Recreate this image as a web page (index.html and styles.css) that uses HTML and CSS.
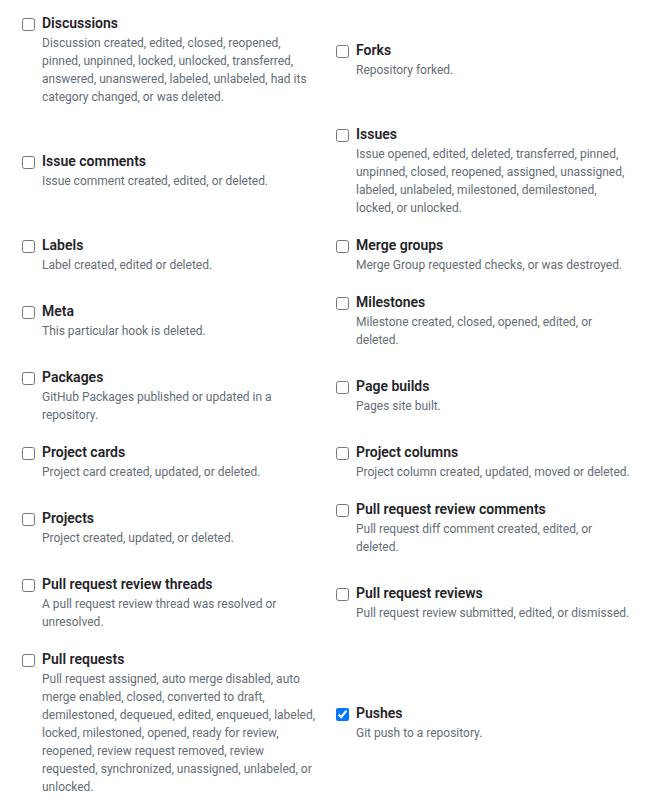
FILE: index.html
```html
<!DOCTYPE html>
<html lang="en">
<head>
<meta charset="utf-8">
<title>Webhook events</title>
<link rel="stylesheet" href="styles.css">
</head>
<body>
<div class="events">
  <label class="event"><input type="checkbox" class="event-check"><span class="event-text"><span class="event-name">Discussions</span><span class="event-desc">Discussion created, edited, closed, reopened, pinned, unpinned, locked, unlocked, transferred, answered, unanswered, labeled, unlabeled, had its category changed, or was deleted.</span></span></label>
  <label class="event"><input type="checkbox" class="event-check"><span class="event-text"><span class="event-name">Forks</span><span class="event-desc">Repository forked.</span></span></label>

  <label class="event"><input type="checkbox" class="event-check"><span class="event-text"><span class="event-name">Issue comments</span><span class="event-desc">Issue comment created, edited, or deleted.</span></span></label>
  <label class="event"><input type="checkbox" class="event-check"><span class="event-text"><span class="event-name">Issues</span><span class="event-desc">Issue opened, edited, deleted, transferred, pinned, unpinned, closed, reopened, assigned, unassigned, labeled, unlabeled, milestoned, demilestoned, locked, or unlocked.</span></span></label>

  <label class="event"><input type="checkbox" class="event-check"><span class="event-text"><span class="event-name">Labels</span><span class="event-desc">Label created, edited or deleted.</span></span></label>
  <label class="event"><input type="checkbox" class="event-check"><span class="event-text"><span class="event-name">Merge groups</span><span class="event-desc">Merge Group requested checks, or was destroyed.</span></span></label>

  <label class="event"><input type="checkbox" class="event-check"><span class="event-text"><span class="event-name">Meta</span><span class="event-desc">This particular hook is deleted.</span></span></label>
  <label class="event"><input type="checkbox" class="event-check"><span class="event-text"><span class="event-name">Milestones</span><span class="event-desc">Milestone created, closed, opened, edited, or deleted.</span></span></label>

  <label class="event"><input type="checkbox" class="event-check"><span class="event-text"><span class="event-name">Packages</span><span class="event-desc">GitHub Packages published or updated in a repository.</span></span></label>
  <label class="event"><input type="checkbox" class="event-check"><span class="event-text"><span class="event-name">Page builds</span><span class="event-desc">Pages site built.</span></span></label>

  <label class="event"><input type="checkbox" class="event-check"><span class="event-text"><span class="event-name">Project cards</span><span class="event-desc">Project card created, updated, or deleted.</span></span></label>
  <label class="event"><input type="checkbox" class="event-check"><span class="event-text"><span class="event-name">Project columns</span><span class="event-desc">Project column created, updated, moved or deleted.</span></span></label>

  <label class="event"><input type="checkbox" class="event-check"><span class="event-text"><span class="event-name">Projects</span><span class="event-desc">Project created, updated, or deleted.</span></span></label>
  <label class="event"><input type="checkbox" class="event-check"><span class="event-text"><span class="event-name">Pull request review comments</span><span class="event-desc">Pull request diff comment created, edited, or deleted.</span></span></label>

  <label class="event"><input type="checkbox" class="event-check"><span class="event-text"><span class="event-name">Pull request review threads</span><span class="event-desc">A pull request review thread was resolved or unresolved.</span></span></label>
  <label class="event"><input type="checkbox" class="event-check"><span class="event-text"><span class="event-name">Pull request reviews</span><span class="event-desc">Pull request review submitted, edited, or dismissed.</span></span></label>

  <label class="event"><input type="checkbox" class="event-check"><span class="event-text"><span class="event-name">Pull requests</span><span class="event-desc">Pull request assigned, auto merge disabled, auto merge enabled, closed, converted to draft, demilestoned, dequeued, edited, enqueued, labeled, locked, milestoned, opened, ready for review, reopened, review request removed, review requested, synchronized, unassigned, unlabeled, or unlocked.</span></span></label>
  <label class="event"><input type="checkbox" class="event-check" checked><span class="event-text"><span class="event-name">Pushes</span><span class="event-desc">Git push to a repository.</span></span></label>
</div>
</body>
</html>
```
FILE: styles.css
```css
html, body {
  margin: 0;
  padding: 0;
  background: #ffffff;
}

body {
  font-family: Roboto, "Liberation Sans", Arial, sans-serif;
  color: #1f2328;
}

.events {
  display: grid;
  grid-template-columns: 314px 314px;
  align-items: center;
  row-gap: 18px;
  padding: 13px 0 0 22px;
}

.event {
  display: flex;
  align-items: flex-start;
  gap: 7px;
}

.event-check {
  flex: none;
  width: 13px;
  height: 13px;
  margin: 5px 0 0 0;
}

.event-text {
  display: flex;
  flex-direction: column;
}

.event-name {
  font-size: 14px;
  font-weight: 600;
  line-height: 21px;
  color: #1f2328;
}

.event-desc {
  margin-top: 0;
  max-width: 276px;
  font-size: 12px;
  line-height: 18px;
  color: #656d76;
}
```
